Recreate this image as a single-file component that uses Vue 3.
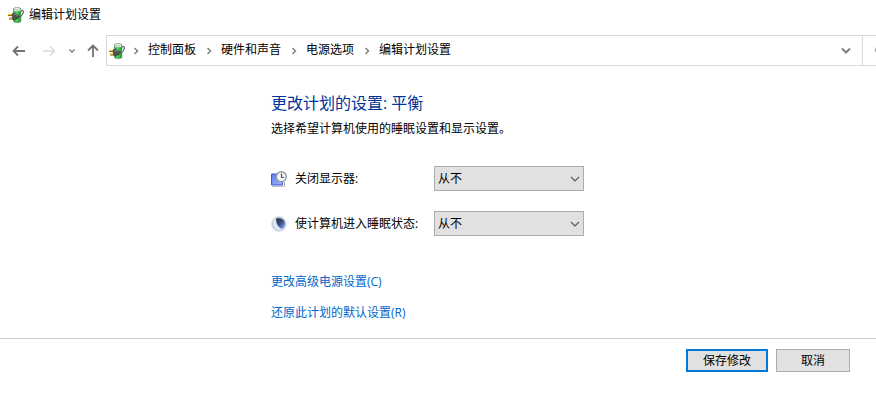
<script setup>
import { ref } from 'vue'

const crumbs = ['控制面板', '硬件和声音', '电源选项', '编辑计划设置']
const choices = ['从不', '1 分钟', '5 分钟', '10 分钟', '30 分钟', '1 小时']
const display = ref('从不')
const sleep = ref('从不')
</script>

<template>
  <div class="window">
    <svg class="defs" aria-hidden="true">
      <defs>
        <linearGradient id="cell" x1="0" x2="1" y1="0" y2="0">
          <stop offset="0" stop-color="#1f9a2c" />
          <stop offset=".4" stop-color="#4fe05a" />
          <stop offset="1" stop-color="#14932a" />
        </linearGradient>
        <linearGradient id="screen" x1="0" x2="1" y1="0" y2="1">
          <stop offset="0" stop-color="#5f7bf0" />
          <stop offset="1" stop-color="#9db4ff" />
        </linearGradient>
        <linearGradient id="moon" x1="0" x2="1" y1="0" y2="1">
          <stop offset="0" stop-color="#a3abb6" />
          <stop offset=".6" stop-color="#a9c2ea" />
          <stop offset="1" stop-color="#cfe0fb" />
        </linearGradient>
        <linearGradient id="shade" x1="0" x2="1" y1="0" y2="1">
          <stop offset="0" stop-color="#2a303b" />
          <stop offset=".5" stop-color="#3a4f80" />
          <stop offset="1" stop-color="#86b0fa" />
        </linearGradient>
      </defs>
      <symbol id="power" viewBox="0 0 16 16">
        <path d="M12.500 4.500C14.500 2.500 15.800 3.800 15.200 6C14.800 8 13.500 9 12 10" fill="none" stroke="#555" stroke-width="1.100" />
        <path d="M5.500 2C5.500 .3 12.800 .3 12.800 2V14C12.800 16 5.500 16 5.500 14Z" fill="url(#cell)" stroke="#3c7043" stroke-width=".6" />
        <path d="M5.800 2C5.800 .5 12.500 .5 12.500 2V4.200H5.800Z" fill="#d9e0dc" />
        <ellipse cx="9.200" cy="1.800" rx="3" ry="1" fill="#f4f7f5" stroke="#9aa39d" stroke-width=".5" />
        <path d="M0 8H4.500M1 11.700H5.500" stroke="#806300" stroke-width="1.800" />
        <path d="M0 7.600H4.500M1 11.300H5.500" stroke="#f2c42e" stroke-width="1.100" />
        <path d="M4 6.800L6.500 6.300L9.500 7.800L11.500 9.500L10 11.500L6.500 13L4.500 12.300Z" fill="#505050" stroke="#2b2b2b" stroke-width=".5" />
        <path d="M5.500 7.500L7.500 7.400L9.800 9" fill="none" stroke="#929292" />
      </symbol>
    </svg>

    <header class="title-bar">
      <svg class="icon"><use href="#power" /></svg>
      <span>编辑计划设置</span>
    </header>

    <div class="toolbar">
      <div class="history">
        <button class="tool" aria-label="后退">
          <svg width="14" height="12" viewBox="0 0 14 12"><path d="M13 6H1.500M6 1.500L1.500 6L6 10.500" stroke="#737373" stroke-width="1.800" /></svg>
        </button>
        <button class="tool forward" aria-label="前进" disabled>
          <svg width="14" height="12" viewBox="0 0 14 12"><path d="M1 6H12.500M8 1.500L12.500 6L8 10.500" stroke="#dadada" stroke-width="1.600" /></svg>
        </button>
        <button class="tool recent" aria-label="最近浏览的位置">
          <svg width="8" height="6" viewBox="0 0 8 6"><path d="M1.500 1.500L4 4L6.500 1.500" stroke="#808080" stroke-width="1.500" /></svg>
        </button>
        <button class="tool up" aria-label="向上">
          <svg width="12" height="14" viewBox="0 0 12 14"><path d="M6 13V1.500M1 6.500L6 1.500L11 6.500" stroke="#737373" stroke-width="1.800" /></svg>
        </button>
      </div>
      <nav class="address">
        <svg class="icon"><use href="#power" /></svg>
        <template v-for="crumb in crumbs" :key="crumb">
          <svg class="sep" width="6" height="8" viewBox="0 0 6 8"><path d="M1.500 1L4.500 4L1.500 7" stroke="#808080" stroke-width="1.500" /></svg>
          <a class="crumb" href="#">{{ crumb }}</a>
        </template>
        <button class="tool expand" aria-label="以前的位置">
          <svg width="10" height="7" viewBox="0 0 10 7"><path d="M1 1.500L5 5.500L9 1.500" stroke="#808080" stroke-width="2" /></svg>
        </button>
      </nav>
      <div class="search">
        <svg width="12" height="12" viewBox="0 0 12 12"><circle cx="5" cy="5" r="4" stroke="#666" stroke-width="1.500" /><path d="M8 8L11 11" stroke="#666" stroke-width="1.500" /></svg>
      </div>
    </div>

    <main class="content">
      <h1>更改计划的设置: 平衡</h1>
      <p>选择希望计算机使用的睡眠设置和显示设置。</p>

      <div class="settings">
        <div class="setting">
          <svg class="icon" viewBox="0 0 16 16">
            <path d="M.5 3H11.500V14H.5Z" fill="url(#screen)" stroke="#4257d0" />
            <path d="M1 15.200H13.500V11" fill="none" stroke="#a4a9b3" />
            <circle cx="10.300" cy="5.800" r="5" fill="#f4f7fa" stroke="#959ba3" stroke-width="1.400" />
            <path d="M10.500 2.500V6.500H13" fill="none" stroke="#4d5663" stroke-width="1.200" />
          </svg>
          <label for="display">关闭显示器:</label>
          <div class="picker">
            <select id="display" v-model="display">
              <option v-for="choice in choices" :key="choice">{{ choice }}</option>
            </select>
            <svg class="arrow" width="10" height="6" viewBox="0 0 10 6"><path d="M1 1L5 5L9 1" stroke="#555" stroke-width="1.100" /></svg>
          </div>
        </div>
        <div class="setting">
          <svg class="icon" viewBox="0 0 16 16">
            <circle cx="8" cy="8" r="7.300" fill="url(#moon)" stroke="#dde1e7" stroke-width="1.200" />
            <path d="M2.500 5C3.300 3.500 4.500 2.500 5.500 2.200C4.800 4.500 5 7 6.500 9.500C7.500 11.500 9 12.800 10.500 13.500C7.500 14.500 4.500 13.500 3 11C2 9 1.800 7 2.500 5Z" fill="#dfe8f6" />
            <path d="M5.300 2.500C8.500 1.500 12 2.500 13.400 5.500C14.600 8.300 13.600 11 11.800 12.600C9.500 12.500 7.700 11 6.500 8.700C5.400 6.500 4.900 4.200 5.300 2.500Z" fill="url(#shade)" />
          </svg>
          <label for="sleep">使计算机进入睡眠状态:</label>
          <div class="picker">
            <select id="sleep" v-model="sleep">
              <option v-for="choice in choices" :key="choice">{{ choice }}</option>
            </select>
            <svg class="arrow" width="10" height="6" viewBox="0 0 10 6"><path d="M1 1L5 5L9 1" stroke="#555" stroke-width="1.100" /></svg>
          </div>
        </div>
      </div>

      <div class="links">
        <a href="#">更改高级电源设置(C)</a>
        <a href="#">还原此计划的默认设置(R)</a>
      </div>
    </main>

    <footer class="actions">
      <button class="action primary">保存修改</button>
      <button class="action">取消</button>
    </footer>
  </div>
</template>

<style>
body {
  background: #fff;
}
</style>

<style scoped>
.window {
  font: 12px/18px "Open Sans", "Noto Sans CJK SC", sans-serif;
  color: #000;
  overflow: hidden;
}
svg {
  display: block;
  flex: none;
  fill: none;
}
.defs {
  position: absolute;
  width: 0;
  height: 0;
}
.icon {
  width: 16px;
  height: 16px;
}
.title-bar {
  display: flex;
  align-items: center;
  gap: 5px;
  height: 29px;
  padding: 0 8px;
}
.toolbar {
  display: flex;
  margin-top: 6px;
  height: 31px;
}
.history {
  display: flex;
  align-items: center;
  flex: none;
  width: 94px;
  padding-left: 12px;
}
.tool {
  flex: none;
  padding: 0;
  border: 0;
  background: none;
}
.forward {
  margin-left: 16px;
}
.recent {
  margin-left: 12px;
}
.up {
  margin-left: 11px;
}
.address {
  display: flex;
  align-items: center;
  flex: 1;
  min-width: 0;
  padding: 0 11px 0 2px;
  border: 1px solid #d9d9d9;
}
.sep {
  margin: 0 9px 0 8px;
}
.crumb {
  padding: 0 2px 2px 0;
  color: inherit;
  text-decoration: none;
  white-space: nowrap;
}
.expand {
  margin-left: auto;
}
.search {
  display: flex;
  align-items: center;
  flex: none;
  width: 1px;
  padding-left: 12px;
  border: 1px solid #d9d9d9;
  border-width: 1px 0;
}
.content {
  padding: 25px 24px 16px 271px;
}
h1 {
  margin: 0;
  font-size: 16px;
  line-height: 24px;
  font-weight: 400;
  color: #003399;
}
p {
  margin: 5px 0 0;
}
.settings {
  display: grid;
  gap: 20px;
  margin-top: 28px;
}
.setting {
  display: grid;
  grid-template-columns: 16px 131px 150px;
  column-gap: 8px;
  align-items: center;
}
.setting label {
  white-space: nowrap;
}
.picker {
  display: grid;
  align-items: center;
}
.picker > * {
  grid-area: 1 / 1;
}
select {
  appearance: none;
  width: 100%;
  height: 25px;
  padding: 0 3px;
  border: 1px solid #adadad;
  border-radius: 0;
  background: #e1e1e1;
  color: inherit;
  font: inherit;
}
.arrow {
  justify-self: end;
  margin-right: 4px;
  pointer-events: none;
}
.links {
  display: grid;
  justify-items: start;
  gap: 13px;
  margin-top: 37px;
}
.links a {
  color: #0066cc;
  text-decoration: none;
}
.actions {
  display: flex;
  justify-content: flex-end;
  gap: 8px;
  padding: 10px 26px;
  border-top: 1px solid #cccccc;
}
.action {
  width: 74px;
  height: 23px;
  padding: 0;
  border: 1px solid #adadad;
  background: #e1e1e1;
  color: inherit;
  font: inherit;
  line-height: 18px;
}
.primary {
  width: 82px;
  border: 2px solid #0078d7;
}
</style>
